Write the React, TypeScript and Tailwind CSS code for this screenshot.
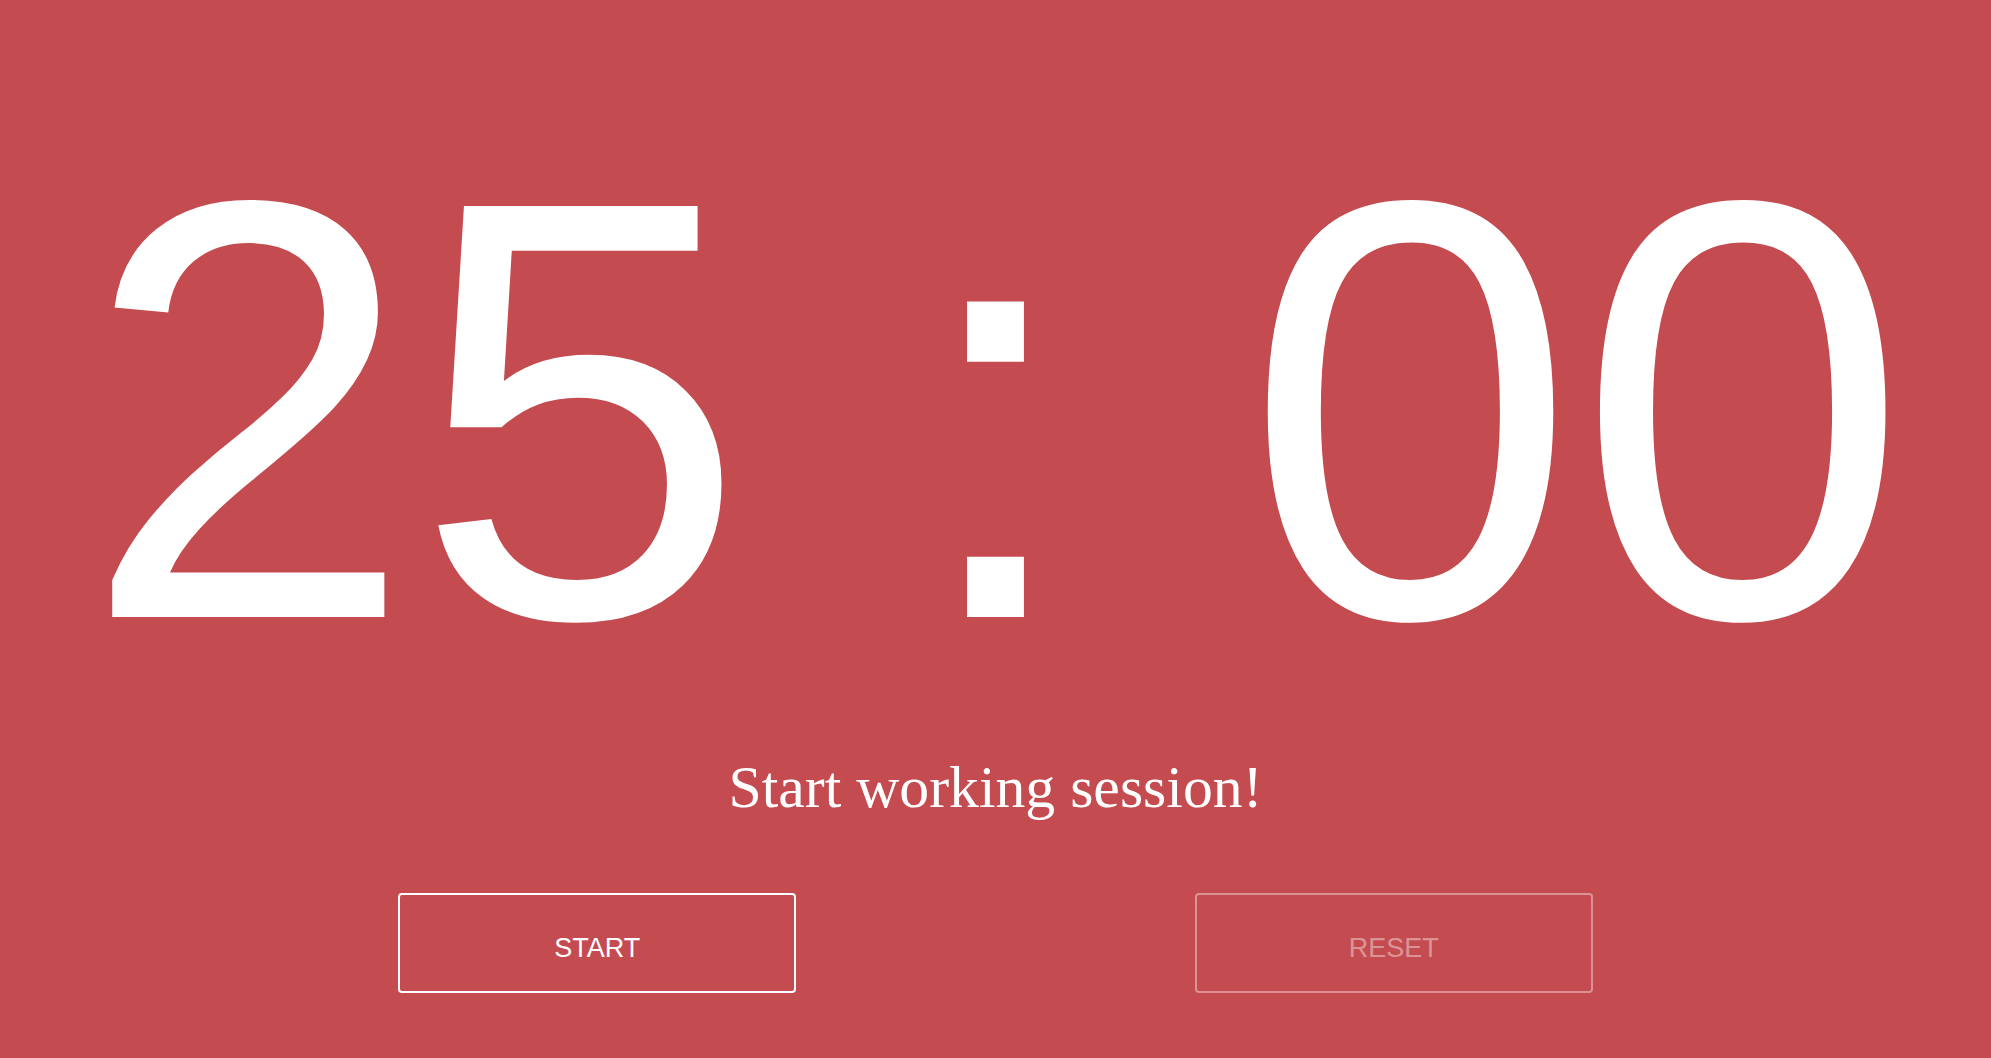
import { useState } from "react";

export default function App() {
  const [running, setRunning] = useState(false);

  return (
    <div className="flex h-screen w-full flex-col items-center overflow-hidden bg-[#c44b4f] pt-[112px] text-white">
      <div className="whitespace-pre text-center font-['Liberation_Sans',Arial,sans-serif] text-[30vw] leading-none">
        25 : 00
      </div>

      <p className="mt-[49px] font-['Liberation_Serif','Times_New_Roman',serif] text-[3vw] leading-none">
        Start working session!
      </p>

      <div className="mt-[75px] flex w-full justify-evenly font-['Liberation_Sans',Arial,sans-serif]">
        <button
          type="button"
          onClick={() => setRunning(!running)}
          className="flex h-[5vw] w-[20vw] items-center justify-center rounded border-2 border-white pt-[11px] text-[27px] text-white"
        >
          {running ? "PAUSE" : "START"}
        </button>
        <button
          type="button"
          disabled
          className="flex h-[5vw] w-[20vw] items-center justify-center rounded border-2 border-white pt-[11px] text-[27px] text-white opacity-40"
        >
          RESET
        </button>
      </div>
    </div>
  );
}
